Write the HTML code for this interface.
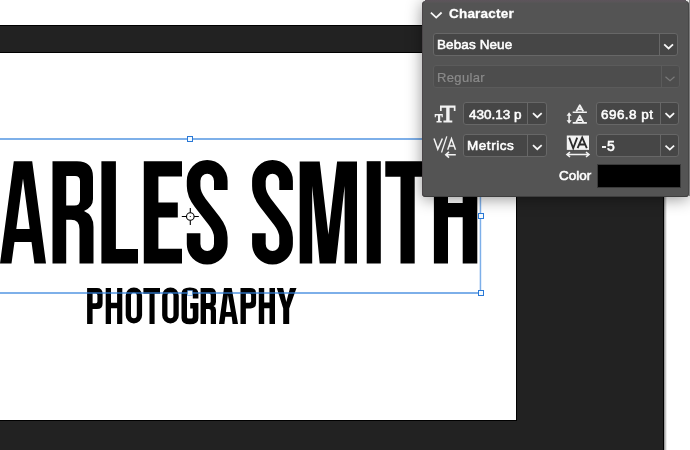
<!DOCTYPE html>
<html><head><meta charset="utf-8">
<style>
*{margin:0;padding:0;box-sizing:border-box}
html,body{width:690px;height:450px;overflow:hidden;background:#fff;position:relative;font-family:"Liberation Sans",sans-serif}
#art{position:absolute;left:0;top:0}
#panel{position:absolute;left:422px;top:1px;width:267px;height:196px;background:#545454;border-radius:4px;
 box-shadow:inset 1px 0 0 #4a4548, inset -1px 0 0 #474747, inset 0 -1px 0 #3e3e3e, 0 2px 16px rgba(0,0,0,0.42)}
.t{position:absolute;will-change:transform;color:#f2f2f2;white-space:nowrap;line-height:1}
.fld{position:absolute;background:#464646;border:1px solid #676767;border-radius:3px}
.dv{position:absolute;top:0;bottom:0;width:1px;background:#676767}
.chev{position:absolute}
.b{font-size:13.5px;font-weight:normal;color:#fff;-webkit-text-stroke:0.55px #fff}
</style></head><body>
<svg id="art" width="690" height="450" viewBox="0 0 690 450">
 <!-- workspace -->
 <rect x="0" y="25" width="664" height="425" fill="#222"/>
 <rect x="0" y="25" width="664" height="1" fill="#000"/>
 <defs><linearGradient id="rs" x1="0" x2="1" y1="0" y2="0"><stop offset="0" stop-color="#000" stop-opacity="0.45"/><stop offset="1" stop-color="#000" stop-opacity="0"/></linearGradient></defs>
 <rect x="663" y="25" width="1" height="425" fill="#000"/>
 <rect x="664" y="197" width="3" height="253" fill="url(#rs)"/>
 <rect x="0" y="52" width="517" height="369" fill="#000"/>
 <rect x="0" y="53" width="516" height="367" fill="#fff"/>
 <g fill="#000">
  <!-- A -->
  <path fill-rule="evenodd" d="M0,263.5 L13.8,161.2 L32.2,161.2 L46,263.5 L34.4,263.5 L31.5,242 L14.5,242 L11.5,263.5 Z M16.3,229 L23,178.5 L29.7,229 Z"/>
  <!-- R -->
  <path fill-rule="evenodd" d="M52.5,263.5 V161.3 H77 Q93,161.3 93,177 V199 Q93,207 84,211 Q93.5,215 93.5,227 V263.5 H79.5 V229 Q79.5,219.7 71,219.7 H66.2 V263.5 Z M66.2,176 H75 Q80,176 80,181 V200 Q80,205.5 74.5,205.5 H66.2 Z"/>
  <!-- L -->
  <path d="M101.4,263.5 V161.2 H115.9 V249 H138 V263.5 Z"/>
  <!-- E -->
  <path d="M143.8,263.5 V161.2 H182 V176.4 H158.4 V202.6 H177.8 V217.6 H158.4 V248.8 H182 V263.5 Z"/>
 </g>
 <g fill="none" stroke="#000" stroke-width="13.6" stroke-linejoin="round">
  <path d="M220.8,190 V181 A13.6,14.1 0 0 0 193.6,181 V186 Q193.6,194.25 200.2,202.8 L214.2,220.9 Q220.8,229.4 220.8,237.6 V244 A13.6,13.7 0 0 1 193.6,244 V233.3"/>
  <path d="M286.1,190 V181 A13.6,14.1 0 0 0 258.9,181 V186 Q258.9,194.25 265.5,202.8 L279.5,220.9 Q286.1,229.4 286.1,237.6 V244 A13.6,13.7 0 0 1 258.9,244 V233.3"/>
 </g>
 <g fill="#000">
  <!-- M -->
  <path d="M299.7,263.6 V161.5 H319.7 L328.4,234.5 L337.1,161.5 H357 V263.6 H344.6 V186 L335.8,263.6 H319.7 L312.2,186 V263.6 Z"/>
  <!-- I -->
  <rect x="366.7" y="161.2" width="14.1" height="102.3"/>
  <!-- T -->
  <path d="M385.3,161.2 H430 V176.7 H414.7 V263.5 H400.5 V176.7 H385.3 Z"/>
  <!-- H -->
  <path d="M433.9,263.5 V161.2 H448 V203 H462.7 V161.2 H477.3 V263.5 H462.7 V217.3 H448 V263.5 Z"/>
 </g>
 <!-- PHOTOGRAPHY -->
 <g fill="#000">
  <path fill-rule="evenodd" d="M87.1,323.9 V287.9 H97 Q102.6,287.9 102.6,293.5 V303.5 Q102.6,309 97,309 H92.6 V323.9 Z M92.6,293.6 H95.9 Q97.4,293.6 97.4,295.3 V301.6 Q97.4,303.3 95.9,303.3 H92.6 Z"/>
  <path d="M105.7,323.9 V287.9 H111 V302.7 H117.1 V287.9 H122.3 V323.9 H117.1 V308.3 H111 V323.9 Z"/>
 </g>
 <g fill="none" stroke="#000" stroke-width="5.3">
  <rect x="128.35" y="290.05" width="11.1" height="30.8" rx="5.55"/>
  <rect x="164.8" y="290.05" width="11.3" height="30.8" rx="5.65"/>
 </g>
 <g fill="#000">
  <path d="M143.4,287.9 H160 V293.7 H154.6 V323.9 H149.5 V293.7 H143.4 Z"/>
  <!-- G -->
  <path fill-rule="evenodd" d="M198.4,298.5 H192.8 V295.2 Q192.8,293.6 191.2,293.6 H188.6 Q187,293.6 187,295.2 V316.9 Q187,318.6 188.6,318.6 H191.2 Q192.8,318.6 192.8,316.9 V308.5 H190.2 V303 H198.4 V318 Q198.4,324.3 189.9,324.3 Q181.5,324.3 181.5,318 V293.6 Q181.5,287.4 189.9,287.4 Q198.4,287.4 198.4,293.6 Z"/>
  <!-- R -->
  <path fill-rule="evenodd" d="M200.6,323.9 V287.9 H210.5 Q216,287.9 216,293.5 V302 Q216,305 213.5,306 Q216,307 216,310 V323.9 H210.8 V311 Q210.8,309 208.8,309 H206 V323.9 Z M206,293.6 H209 Q210.7,293.6 210.7,295.3 V301.4 Q210.7,303.1 209,303.1 H206 Z"/>
  <!-- A -->
  <path fill-rule="evenodd" d="M219,323.9 L224,287.9 H231.7 L238,323.9 H232.6 L231.7,316.8 H225.3 L224.4,323.9 Z M225.9,312 L227.9,295 L230.9,312 Z"/>
  <!-- P -->
  <path fill-rule="evenodd" d="M240.5,323.9 V287.9 H250.5 Q256.1,287.9 256.1,293.5 V303 Q256.1,308.5 250.5,308.5 H245.9 V323.9 Z M245.9,293.6 H249.4 Q251.1,293.6 251.1,295.3 V301.1 Q251.1,302.8 249.4,302.8 H245.9 Z"/>
  <!-- H -->
  <path d="M258.8,323.9 V287.9 H264.2 V302.6 H269.5 V287.9 H275 V323.9 H269.5 V308.2 H264.2 V323.9 Z"/>
  <!-- Y -->
  <path d="M276.8,287.9 H283.1 L286.3,302 L290,287.9 H296.5 L289.2,308.4 V323.9 H283.2 V308.4 Z"/>
 </g>
 <!-- text box -->
 <g fill="#2f7fdc" opacity="0.62">
  <rect x="0" y="138" width="480" height="2"/>
  <rect x="0" y="292" width="480" height="2"/>
  <rect x="479.7" y="138" width="1.5" height="156"/>
 </g>
 <g stroke="#2a78d6" stroke-width="1" fill="#f4fbff">
  <rect x="187.5" y="136.5" width="5" height="5"/>
  <rect x="478.5" y="213.5" width="5" height="5"/>
  <rect x="478.5" y="290.5" width="5" height="5"/>
 </g>
 <rect x="187.5" y="290.5" width="5" height="5" fill="#eaf7ff" stroke="#2a78d6" stroke-opacity="0.45"/>
 <!-- crosshair -->
 <g stroke="#000" stroke-width="1.1" fill="none">
  <circle cx="190.3" cy="216.5" r="3.8"/>
  <path d="M181.8,216.5 H186.5 M194.1,216.5 H198.8 M190.3,208 V212.7 M190.3,220.3 V225"/>
 </g>
 <circle cx="190.3" cy="216.5" r="0.6" fill="#000"/>
</svg>
<div style="position:absolute;left:689px;top:0;width:1px;height:196px;background:#9a9a9a"></div>
<div id="panel">
 <div style="position:absolute;left:3px;right:3px;top:-1px;height:3px;background:linear-gradient(#5d545b,#5a5559 60%,#555)"></div>
 <div class="fld" style="left:11px;top:32px;width:245px;height:23px"><div class="dv" style="left:225px"></div></div>
 <div class="fld" style="left:11px;top:64px;width:247px;height:23px;background:#4d4d4d;border-color:#5b5b5b"><div class="dv" style="left:227px;background:#5b5b5b"></div></div>
 <div class="fld" style="left:41px;top:101px;width:84px;height:23px"><div class="dv" style="left:63px"></div></div>
 <div class="fld" style="left:41px;top:133px;width:84px;height:23px"><div class="dv" style="left:63px"></div></div>
 <div class="fld" style="left:174px;top:101px;width:83px;height:23px"><div class="dv" style="left:63px"></div></div>
 <div class="fld" style="left:174px;top:133px;width:83px;height:23px"><div class="dv" style="left:63px"></div></div>
 <div style="position:absolute;left:175px;top:163px;width:84px;height:24px;background:#000;border:1px solid #3a3a3a"></div>
 <svg style="position:absolute;left:0;top:0" width="267" height="196">
  <g fill="none" stroke="#f8f8f8" stroke-width="1.75">
   <path d="M8.9,11.7 L14.2,16.6 L19.6,11.5"/>
   <path d="M242.2,43.3 L246.6,47.5 L251,43.3"/>
   <path d="M111,112.2 L115.3,116.2 L119.7,112.2"/>
   <path d="M111,144.2 L115.3,148.2 L119.7,144.2"/>
   <path d="M243.5,112.2 L247.8,116.2 L252.1,112.2"/>
   <path d="M243.5,144.6 L247.8,148.6 L252.1,144.6"/>
  </g>
  <path d="M243.5,75.8 L248,79.8 L252.5,75.8" fill="none" stroke="#7a7a7a" stroke-width="1.2"/>
  <g fill="#f2f2f2">
   <path d="M18,104.6 H33.5 V109.9 H31.8 V106.8 H27.6 V119.6 H30.3 V121.4 H21.4 V119.6 H24.2 V106.8 H19.7 V109.9 H18 Z"/>
   <path d="M12.7,113 H20.8 V116.2 H19.6 V114.6 H18.2 V120 H19.7 V121.4 H14.5 V120 H16 V114.6 H13.9 V116.2 H12.7 Z"/>
  </g>
  <g fill="none" stroke="#f2f2f2" stroke-width="1.5">
   <path d="M12,137.5 L15.8,148.1 L20.4,137.5"/>
   <path d="M24.8,135.4 L19.5,151.5" stroke-width="1.3"/>
   <path d="M25.7,148.7 L29.5,137.8 L33.5,148.7 M27,145 H32"/>
   <path d="M24,153.7 H33.8 M27,150.8 L23.8,153.7 L27,156.6" stroke-width="1.6"/>
   <path d="M154.3,110.5 L157.8,104.2 L161.3,110.5 M155.6,108.4 H160" stroke-width="1.8" stroke-linejoin="round"/>
   <path d="M150.7,111.3 H164.9 M150.7,121.9 H164.9" stroke-width="1.6"/>
   <path d="M154.3,121.1 L157.8,114.8 L161.3,121.1 M155.6,119 H160" stroke-width="1.8" stroke-linejoin="round"/>
   <path d="M147.1,113.5 V120.5" stroke-width="1.6"/>
   <path d="M145.5,153.5 H166.5 M148,151 L145,153.5 L148,156 M164,151 L167,153.5 L164,156" stroke-width="1.6"/>
  </g>
  <path d="M144.6,114.8 L147.1,111.3 L149.6,114.8 Z M144.6,119.2 L147.1,122.7 L149.6,119.2 Z" fill="#f2f2f2"/>
  <rect x="144.8" y="134.5" width="22.2" height="14.4" fill="#f2f2f2"/>
  <g fill="none" stroke="#2a2a2a" stroke-width="1.8">
   <path d="M147.2,136.6 L151.2,147.2 L155.2,136.6"/>
   <path d="M155.6,147.2 L160.2,136.6 L164.8,147.2 M157.6,143.5 H163"/>
  </g>
 </svg>
 <div class="t" id="tchar" style="left:27px;top:6px;font-size:13.5px;font-weight:bold;letter-spacing:0.2px;color:#fff;-webkit-text-stroke:0.3px #fff">Character</div>
 <div class="t b" id="tbeb" style="left:14.8px;top:37px;letter-spacing:0.1px">Bebas Neue</div>
 <div class="t" id="treg" style="left:15px;top:70px;font-size:13px;color:#8a8a8a;letter-spacing:0.35px;-webkit-text-stroke:0.2px #8a8a8a">Regular</div>
 <div class="t b" id="tsize" style="left:46.5px;top:106.5px;">430.13 p</div>
 <div class="t b" id="tmet" style="left:45.3px;top:138px;letter-spacing:0.55px">Metrics</div>
 <div class="t b" id="tlead" style="left:179.3px;top:106.5px;letter-spacing:0.45px">696.8 pt</div>
 <div class="t b" id="ttrk" style="left:185.3px;top:138px;font-size:14px">5</div><div style="position:absolute;left:179.6px;top:145px;width:4.8px;height:2px;background:#f2f2f2"></div>
 <div class="t b" id="tcol" style="left:136.5px;top:168px;letter-spacing:0px">Color</div>
</div>
</body></html>
